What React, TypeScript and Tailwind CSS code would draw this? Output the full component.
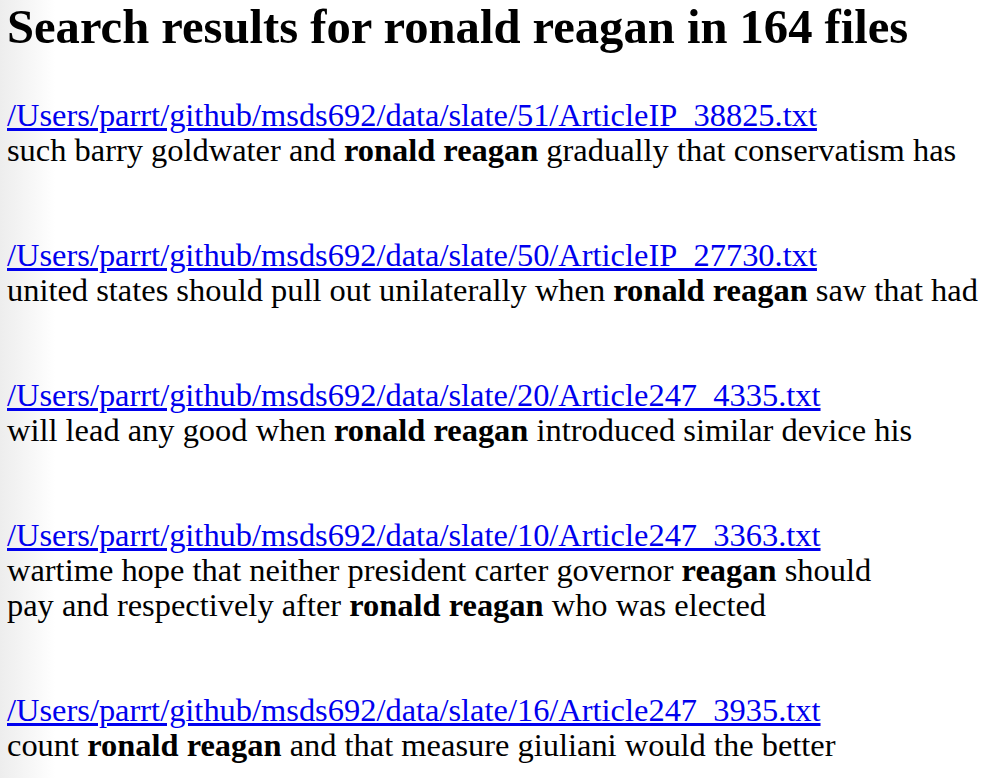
import React from "react";

type Result = {
  path: string;
  lines: React.ReactNode[];
};

const B: React.FC<{ children: React.ReactNode }> = ({ children }) => (
  <b className="font-bold">{children}</b>
);

const RESULTS: Result[] = [
  {
    path: "/Users/parrt/github/msds692/data/slate/51/ArticleIP_38825.txt",
    lines: [
      <>
        such barry goldwater and <B>ronald reagan</B> gradually that conservatism has
      </>,
    ],
  },
  {
    path: "/Users/parrt/github/msds692/data/slate/50/ArticleIP_27730.txt",
    lines: [
      <>
        united states should pull out unilaterally when <B>ronald reagan</B> saw that had
      </>,
    ],
  },
  {
    path: "/Users/parrt/github/msds692/data/slate/20/Article247_4335.txt",
    lines: [
      <>
        will lead any good when <B>ronald reagan</B> introduced similar device his
      </>,
    ],
  },
  {
    path: "/Users/parrt/github/msds692/data/slate/10/Article247_3363.txt",
    lines: [
      <>
        wartime hope that neither president carter governor <B>reagan</B> should
      </>,
      <>
        pay and respectively after <B>ronald reagan</B> who was elected
      </>,
    ],
  },
  {
    path: "/Users/parrt/github/msds692/data/slate/16/Article247_3935.txt",
    lines: [
      <>
        count <B>ronald reagan</B> and that measure giuliani would the better
      </>,
    ],
  },
];

export default function App() {
  return (
    <div className="min-h-[778px] bg-[linear-gradient(to_right,#ededed,#ffffff_55px)] px-[7px] font-['Liberation_Serif','Times_New_Roman',serif] text-black">
      <h1 className="pt-[2px] text-[48.6px] font-bold leading-[50px] whitespace-nowrap">
        Search results for ronald reagan in 164 files
      </h1>

      <div className="mt-[46px] flex flex-col gap-[70px]">
        {RESULTS.map((r) => (
          <div key={r.path} className="text-[32.45px] leading-[35px] whitespace-nowrap">
            <a href="#" className="text-[#0000ee] underline">
              {r.path}
            </a>
            {r.lines.map((line, i) => (
              <div key={i}>{line}</div>
            ))}
          </div>
        ))}
      </div>
    </div>
  );
}
